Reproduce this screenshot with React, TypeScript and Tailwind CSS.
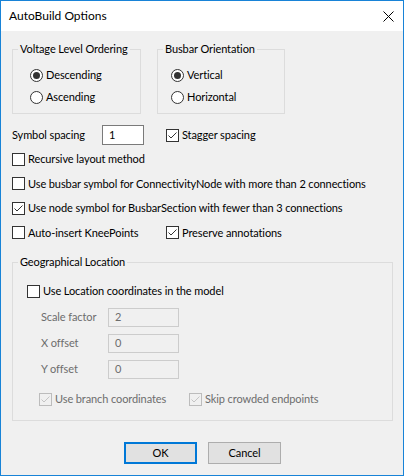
import React from "react";

function Radio({ checked }: { checked: boolean }) {
  return (
    <svg width="13" height="13" viewBox="0 0 13 13" className="shrink-0">
      <circle cx="6.5" cy="6.5" r="6" fill="#ffffff" stroke="#333333" strokeWidth="1" />
      {checked && <circle cx="6.5" cy="6.5" r="3.5" fill="#333333" />}
    </svg>
  );
}

function Check({ checked, disabled }: { checked: boolean; disabled?: boolean }) {
  const line = disabled ? "#bcbcbc" : "#333333";
  return (
    <svg width="13" height="13" viewBox="0 0 13 13" className="shrink-0">
      <rect x="0.5" y="0.5" width="12" height="12" fill={disabled ? "#f0f0f0" : "#ffffff"} stroke={line} />
      {checked && (
        <path d="M2.5 6.5 L5 9 L10.5 3.5" fill="none" stroke={disabled ? "#c4c4c4" : "#333333"} strokeWidth="1" />
      )}
    </svg>
  );
}

function CheckRow({
  label,
  checked,
  disabled,
}: {
  label: string;
  checked?: boolean;
  disabled?: boolean;
}) {
  return (
    <div className="flex items-center gap-[3px] whitespace-nowrap">
      <Check checked={!!checked} disabled={disabled} />
      <span className={disabled ? "text-[#6d6d6d]" : "text-black"}>{label}</span>
    </div>
  );
}

function Group({
  title,
  className,
  children,
}: {
  title: string;
  className: string;
  children: React.ReactNode;
}) {
  return (
    <fieldset className={`border border-[#dcdcdc] ${className}`}>
      <legend className="ml-[5px] whitespace-nowrap px-[2px] leading-[16px]">{title}</legend>
      {children}
    </fieldset>
  );
}

function OffsetRow({ label, value }: { label: string; value: string }) {
  return (
    <div className="flex h-[26px] items-center">
      <span className="w-[67px] text-[#6d6d6d]">{label}</span>
      <div className="flex h-[19px] w-[71px] items-center border border-[#cccccc] bg-[#f0f0f0] pl-[6px] text-[#6d6d6d]">
        {value}
      </div>
    </div>
  );
}

export default function App() {
  return (
    <div
      className="flex h-[476px] w-[404px] flex-col border border-[#1883d7] text-[11px] leading-[16px] tracking-[-0.1px] text-black"
      style={{ fontFamily: 'Lato, "Liberation Sans", sans-serif' }}
    >
      {/* title bar */}
      <div className="flex h-[30px] items-center justify-between bg-white pl-[8px] pr-[9px]">
        <span className="text-[12px] tracking-normal">AutoBuild Options</span>
        <svg width="11" height="11" viewBox="0 0 11 11">
          <path d="M0.5 0.5 L10.5 10.5 M10.5 0.5 L0.5 10.5" stroke="#000000" strokeWidth="1" />
        </svg>
      </div>

      <div className="flex flex-1 flex-col bg-[#f0f0f0] pl-[11px] pr-[10px]">
        <div className="mt-[10px] flex gap-[16px]">
          <Group title="Voltage Level Ordering" className="h-[73px] w-[129px]">
            <div className="mt-[10px] flex flex-col gap-[6px] pl-[17px]">
              <div className="flex items-center gap-[3px]">
                <Radio checked />
                <span>Descending</span>
              </div>
              <div className="flex items-center gap-[3px]">
                <Radio checked={false} />
                <span>Ascending</span>
              </div>
            </div>
          </Group>
          <Group title="Busbar Orientation" className="h-[73px] w-[128px]">
            <div className="mt-[10px] flex flex-col gap-[6px] pl-[13px]">
              <div className="flex items-center gap-[3px]">
                <Radio checked />
                <span>Vertical</span>
              </div>
              <div className="flex items-center gap-[3px]">
                <Radio checked={false} />
                <span>Horizontal</span>
              </div>
            </div>
          </Group>
        </div>

        <div className="mt-[9px] flex h-[24px] items-center">
          <span className="w-[90px]">Symbol spacing</span>
          <div className="flex h-[20px] w-[42px] items-center border border-[#7a7a7a] bg-white pl-[6px]">1</div>
          <div className="ml-[22px]">
            <CheckRow label="Stagger spacing" checked />
          </div>
        </div>
        <div className="flex h-[24px] items-center">
          <CheckRow label="Recursive layout method" />
        </div>
        <div className="flex h-[25px] items-center">
          <CheckRow label="Use busbar symbol for ConnectivityNode with more than 2 connections" />
        </div>
        <div className="flex h-[24px] items-center">
          <CheckRow label="Use node symbol for BusbarSection with fewer than 3 connections" checked />
        </div>
        <div className="flex h-[25px] items-center">
          <div className="w-[154px]">
            <CheckRow label="Auto-insert KneePoints" />
          </div>
          <CheckRow label="Preserve annotations" checked />
        </div>

        <Group title="Geographical Location" className="mt-[9px] h-[167px] w-[381px]">
          <div className="mt-[13px] pl-[14px]">
            <CheckRow label="Use Location coordinates in the model" />
          </div>
          <div className="mt-[5px] flex flex-col pl-[28px]">
            <OffsetRow label="Scale factor" value="2" />
            <OffsetRow label="X offset" value="0" />
            <OffsetRow label="Y offset" value="0" />
          </div>
          <div className="mt-[9px] flex pl-[26px]">
            <div className="w-[150px]">
              <CheckRow label="Use branch coordinates" checked disabled />
            </div>
            <CheckRow label="Skip crowded endpoints" checked disabled />
          </div>
        </Group>

        <div className="mt-[21px] flex justify-center gap-[11px]">
          <button className="h-[22px] w-[73px] border-2 border-[#0078d7] bg-[#e1e1e1]">OK</button>
          <button className="h-[22px] w-[73px] border border-[#adadad] bg-[#e1e1e1]">Cancel</button>
        </div>
      </div>
    </div>
  );
}
